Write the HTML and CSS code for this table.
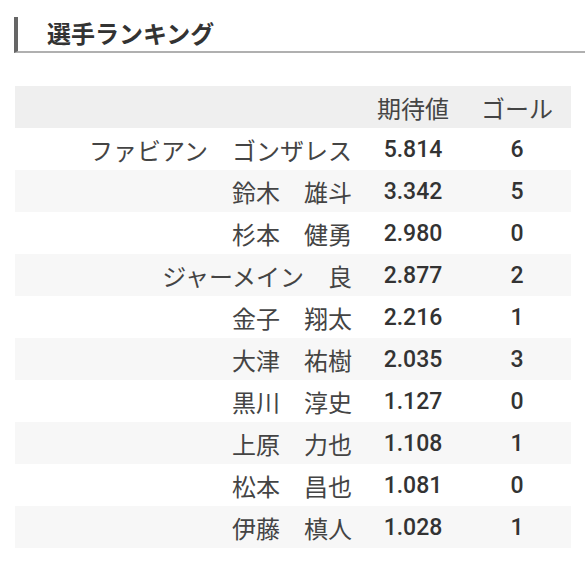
FILE: index.html
```html
<!DOCTYPE html>
<html lang="ja">
<head>
<meta charset="utf-8">
<link rel="stylesheet" href="styles.css">
</head>
<body>
<h2 class="heading">選手ランキング</h2>
<div class="ranking">
  <div class="row head">
    <div class="name"></div>
    <div class="val">期待値</div>
    <div class="val">ゴール</div>
  </div>
  <div class="row"><div class="name">ファビアン　ゴンザレス</div><div class="num">5.814</div><div class="num">6</div></div>
  <div class="row alt"><div class="name">鈴木　雄斗</div><div class="num">3.342</div><div class="num">5</div></div>
  <div class="row"><div class="name">杉本　健勇</div><div class="num">2.980</div><div class="num">0</div></div>
  <div class="row alt"><div class="name">ジャーメイン　良</div><div class="num">2.877</div><div class="num">2</div></div>
  <div class="row"><div class="name">金子　翔太</div><div class="num">2.216</div><div class="num">1</div></div>
  <div class="row alt"><div class="name">大津　祐樹</div><div class="num">2.035</div><div class="num">3</div></div>
  <div class="row"><div class="name">黒川　淳史</div><div class="num">1.127</div><div class="num">0</div></div>
  <div class="row alt"><div class="name">上原　力也</div><div class="num">1.108</div><div class="num">1</div></div>
  <div class="row"><div class="name">松本　昌也</div><div class="num">1.081</div><div class="num">0</div></div>
  <div class="row alt"><div class="name">伊藤　槙人</div><div class="num">1.028</div><div class="num">1</div></div>
</div>
</body>
</html>
```
FILE: styles.css
```css
html, body {
  margin: 0;
  padding: 0;
  background: #ffffff;
}
body {
  font-family: "Noto Sans CJK JP", "Noto Sans", sans-serif;
  color: #444;
}
.heading {
  margin: 17px 0 0 14px;
  padding: 0 0 2px 29px;
  height: 32px;
  line-height: 32px;
  font-size: 24px;
  font-weight: 700;
  color: #333;
  border-left: 4px solid #666;
  border-bottom: 2px solid #b0b0b0;
}
.ranking {
  margin: 33px 0 0 15px;
  width: 556px;
}
.row {
  display: grid;
  grid-template-columns: 348px 100px 108px;
  height: 42px;
  align-items: center;
  font-size: 24px;
}
.row.head {
  background: #efefef;
}
.row.alt {
  background: #f7f7f7;
}
.name {
  text-align: right;
  padding-right: 11px;
  white-space: nowrap;
  color: #444;
}
.val {
  text-align: center;
  color: #444;
}
.num {
  text-align: center;
  font-family: Roboto, "Liberation Sans", sans-serif;
  font-size: 23px;
  font-weight: 500;
  color: #333;
}
```
